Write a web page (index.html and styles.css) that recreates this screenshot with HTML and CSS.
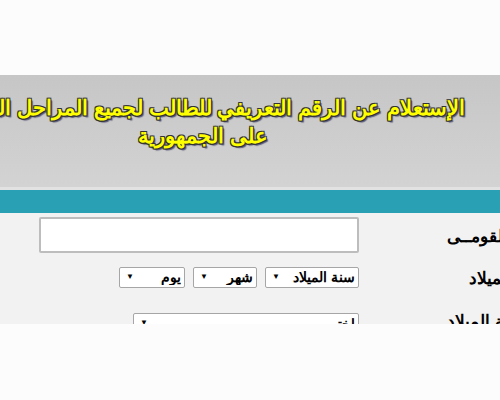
FILE: index.html
```html
<!DOCTYPE html>
<html lang="ar">
<head>
<meta charset="utf-8">
<link rel="stylesheet" href="styles.css">
</head>
<body>
  <header class="banner">
    <div class="banner-inner">
      <h1 class="title">الإستعلام عن الرقم التعريفي للطالب لجميع المراحل التعليمية<br>على الجمهورية</h1>
    </div>
  </header>
  <div class="bar"></div>
  <main class="content">
    <form class="form">
      <label class="label" for="nid">الرقم القومــى</label>
      <div class="field"><input id="nid" class="text-input" type="text"></div>

      <label class="label">تاريخ الميلاد</label>
      <div class="field selects">
        <span class="sel w-year"><select><option>سنة الميلاد</option></select></span>
        <span class="sel w-month"><select><option>شهر</option></select></span>
        <span class="sel w-day"><select><option>يوم</option></select></span>
      </div>

      <label class="label">محافظة الميلاد</label>
      <div class="field field-top">
        <span class="sel w-gov"><select><option>اختر</option></select></span>
      </div>
    </form>
  </main>
</body>
</html>
```
FILE: styles.css
```css
html, body {
  margin: 0;
  padding: 0;
}
body {
  width: 500px;
  height: 400px;
  overflow: hidden;
  background: #fcfcfc;
  font-family: "Liberation Sans", Arial, sans-serif;
}
.banner {
  margin-top: 75px;
  height: 112px;
  background: linear-gradient(#c6c6c6, #d3d3d3);
  border-bottom: 3px solid #e2e2e2;
  overflow: hidden;
}
.banner-inner {
  width: 720px;
  margin-left: -157px;
  direction: rtl;
  text-align: center;
}
.title {
  margin: 0;
  padding-top: 19px;
  font-size: 21px;
  line-height: 28px;
  font-weight: bold;
  color: #ffff00;
  text-shadow: -1px -1px 0 #333, 1px -1px 0 #333, -1px 1px 0 #333, 1px 1px 0 #333, 0 1px 0 #333, 2px 2px 1px #5a5a7a;
}
.bar {
  height: 23px;
  background: #2aa0b5;
}
.content {
  height: 111px;
  background: #f2f2f2;
  overflow: hidden;
}
.form {
  width: 555px;
  direction: rtl;
  display: grid;
  grid-template-columns: 196px 359px;
  grid-template-rows: 44px 40px 46px;
  align-items: center;
}
.label {
  padding-right: 4px;
  padding-top: 2px;
  font-size: 17px;
  font-weight: bold;
  color: #000;
  white-space: nowrap;
}
.field {
  display: flex;
  gap: 8px;
  align-items: center;
}
.field-top {
  align-self: start;
  padding-top: 16px;
}
.text-input {
  box-sizing: border-box;
  width: 320px;
  height: 36px;
  margin: 0;
  border: 2px solid #bdbdbd;
  border-radius: 2px;
  background: #fff;
}
.sel {
  position: relative;
  display: inline-block;
  height: 21px;
}
.sel select {
  -webkit-appearance: none;
  appearance: none;
  box-sizing: border-box;
  width: 100%;
  height: 21px;
  margin: 0;
  padding: 0 3px 0 18px;
  border: 1px solid #a6a6a6;
  border-radius: 2px;
  background: #fff;
  font-family: "Liberation Sans", Arial, sans-serif;
  font-size: 14px;
  font-weight: bold;
  color: #000;
  direction: rtl;
}
.sel::after {
  content: "▼";
  position: absolute;
  left: 7px;
  top: 5px;
  font-size: 8px;
  line-height: 10px;
  color: #000;
  pointer-events: none;
}
.w-year { width: 94px; }
.w-month { width: 64px; }
.w-day { width: 66px; }
.w-gov { width: 226px; }
```
